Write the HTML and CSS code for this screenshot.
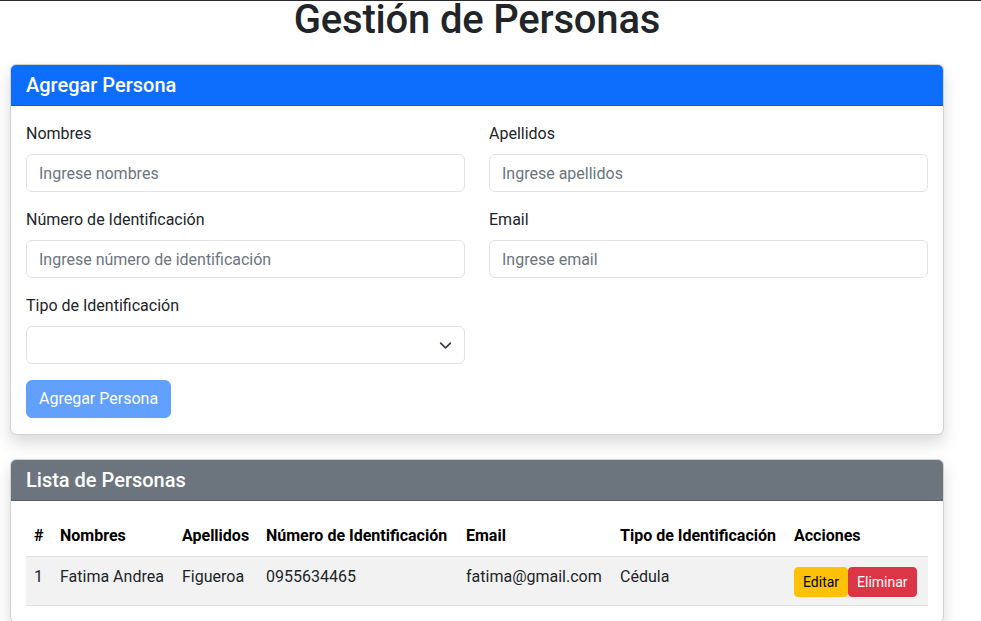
FILE: index.html
```html
<!DOCTYPE html>
<html lang="es">
<head>
<meta charset="utf-8">
<title>Gestión de Personas</title>
<link rel="stylesheet" href="styles.css">
</head>
<body>
<div class="topline"></div>
<main class="container">
  <h1 class="title">Gestión de Personas</h1>

  <section class="card">
    <div class="card-header primary"><h2>Agregar Persona</h2></div>
    <div class="card-body">
      <form class="form">
        <div class="row">
          <div class="field">
            <label>Nombres</label>
            <input type="text" placeholder="Ingrese nombres">
          </div>
          <div class="field">
            <label>Apellidos</label>
            <input type="text" placeholder="Ingrese apellidos">
          </div>
        </div>
        <div class="row">
          <div class="field">
            <label>Número de Identificación</label>
            <input type="text" placeholder="Ingrese número de identificación">
          </div>
          <div class="field">
            <label>Email</label>
            <input type="text" placeholder="Ingrese email">
          </div>
        </div>
        <div class="row">
          <div class="field">
            <label>Tipo de Identificación</label>
            <div class="select">
              <svg class="chev" width="16" height="16" viewBox="0 0 16 16"><path d="M2 5l6 6 6-6" fill="none" stroke="#343a40" stroke-width="2" stroke-linecap="round" stroke-linejoin="round"/></svg>
            </div>
          </div>
          <div class="field"></div>
        </div>
        <div class="actions">
          <button type="button" class="btn btn-primary disabled">Agregar Persona</button>
        </div>
      </form>
    </div>
  </section>

  <section class="card second">
    <div class="card-header secondary"><h2>Lista de Personas</h2></div>
    <div class="card-body table-body">
      <table class="table">
        <colgroup>
          <col class="c-num"><col class="c-nom"><col class="c-ape"><col class="c-id"><col class="c-email"><col class="c-tipo"><col class="c-acc">
        </colgroup>
        <thead>
          <tr>
            <th>#</th><th>Nombres</th><th>Apellidos</th><th>Número de Identificación</th><th>Email</th><th>Tipo de Identificación</th><th>Acciones</th>
          </tr>
        </thead>
        <tbody>
          <tr>
            <td>1</td><td>Fatima Andrea</td><td>Figueroa</td><td>0955634465</td><td>fatima@gmail.com</td><td>Cédula</td>
            <td><div class="btns"><button type="button" class="btn-sm warning">Editar</button><button type="button" class="btn-sm danger">Eliminar</button></div></td>
          </tr>
        </tbody>
      </table>
    </div>
  </section>
</main>
</body>
</html>
```

FILE: styles.css
```css
* { box-sizing: border-box; }
html, body { margin: 0; padding: 0; background: #fff; }
body {
  font-family: Roboto, "Liberation Sans", sans-serif;
  font-size: 16px;
  line-height: 1.5;
  color: #212529;
  overflow: hidden;
}
.topline { height: 1px; background: #2b2b2b; }
.container {
  width: 934px;
  margin-left: 10px;
}
.title {
  margin: -5px 0 20px;
  font-size: 40px;
  font-weight: 500;
  line-height: 1.2;
  letter-spacing: -0.2px;
  text-align: center;
  color: #212529;
}
.card {
  border: 1px solid rgba(0,0,0,.175);
  border-radius: 6px;
  background: #fff;
  box-shadow: 0 8px 16px rgba(0,0,0,.15);
  overflow: hidden;
}
.card.second { margin-top: 24px; }
.card-header {
  padding: 8px 15px;
  border-bottom: 1px solid rgba(0,0,0,.175);
}
.card-header h2 {
  margin: 0;
  font-size: 20px;
  font-weight: 500;
  line-height: 24px;
  color: #fff;
}
.card-header.primary { background: #0d6efd; }
.card-header.secondary { background: #6c757d; }
.card-body { padding: 16px 15px; }
.card-body.table-body { padding-top: 15px; }
.row {
  display: grid;
  grid-template-columns: 1fr 1fr;
  column-gap: 24px;
  margin-bottom: 16px;
}
.field label {
  display: block;
  margin-bottom: 8px;
  line-height: 24px;
}
.field input, .select {
  display: block;
  width: 100%;
  height: 38px;
  padding: 6px 12px;
  font-family: inherit;
  font-size: 16px;
  line-height: 24px;
  color: #212529;
  background: #fff;
  border: 1px solid #dee2e6;
  border-radius: 6px;
  outline: none;
}
.field input::placeholder { color: #6c757d; opacity: 1; }
.select {
  display: flex;
  align-items: center;
  justify-content: flex-end;
  padding-right: 12px;
}
.chev { width: 13px; height: 13px; }
.btn {
  height: 38px;
  padding: 6px 12px;
  font-family: inherit;
  font-size: 16px;
  line-height: 24px;
  border: 1px solid transparent;
  border-radius: 6px;
}
.btn-primary { background: #0d6efd; color: #fff; border-color: #0d6efd; }
.btn.disabled { opacity: .65; }
.table {
  width: 100%;
  border-collapse: collapse;
  table-layout: fixed;
}
.c-num { width: 26px; }
.c-nom { width: 122px; }
.c-ape { width: 84px; }
.c-id { width: 200px; }
.c-email { width: 154px; }
.c-tipo { width: 174px; }
.c-acc { width: 142px; }
.table th, .table td {
  padding: 8px;
  text-align: left;
  vertical-align: top;
  line-height: 24px;
  border-bottom: 1px solid #dee2e6;
  white-space: nowrap;
}
.table th { font-weight: 700; color: #000; }
.table tbody tr { background: #f2f2f2; }
.btns { display: flex; padding-top: 2px; }
.btn-sm {
  height: 30px;
  padding: 4px 8px;
  font-family: inherit;
  font-size: 14px;
  line-height: 21px;
  border: 1px solid transparent;
  border-radius: 4px;
}
.warning { background: #ffc107; color: #000; border-color: #ffc107; }
.danger { background: #dc3545; color: #fff; border-color: #dc3545; }
```
